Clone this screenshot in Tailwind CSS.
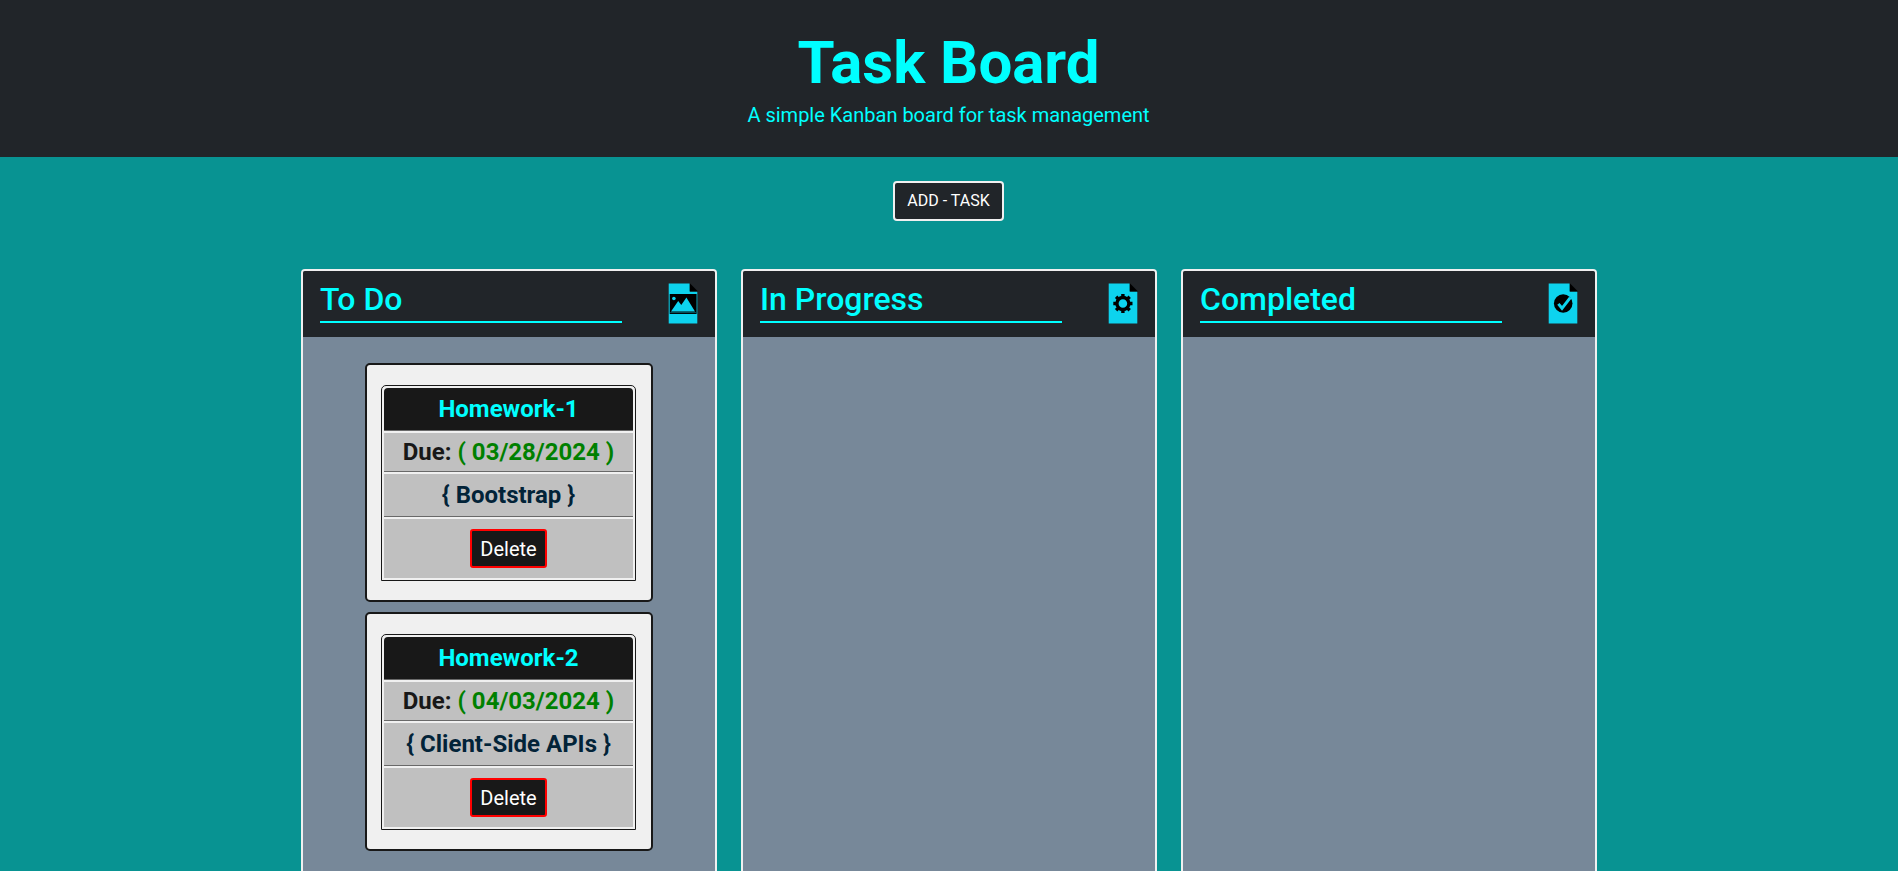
<!DOCTYPE html>
<html lang="en">
<head>
<meta charset="utf-8">
<title>Task Board</title>
<script src="https://cdn.jsdelivr.net/npm/@tailwindcss/browser@4"></script>
</head>
<body class="flex h-screen flex-col overflow-hidden bg-[#089392] font-['Roboto',sans-serif]">
<header class="flex h-[157px] shrink-0 flex-col items-center bg-[#212529] pt-[27px] text-[#00ffff]">
  <h1 class="pr-px text-[60px] font-bold leading-[72px]">Task Board</h1>
  <p class="mt-px pr-px text-[20px] leading-[30px]">A simple Kanban board for task management</p>
</header>
<div class="flex shrink-0 justify-center pr-px pt-6">
  <button class="h-10 w-[111px] rounded-[4px] border-2 border-[#f0f0f0] bg-[#212529] text-[16px] leading-6 text-white">ADD - TASK</button>
</div>
<main class="mt-12 flex min-h-0 flex-1 justify-center gap-6">
  <section class="w-[416px] rounded-t-[4px] border-2 border-b-0 border-[#f0f0f0] bg-[#778899]">
    <div class="flex h-[66px] justify-between rounded-t-[2px] bg-[#212529] px-[17px]">
      <h2 class="mt-[8px] h-[44px] w-[302px] border-b-2 border-[#00ffff] text-[32px] font-medium leading-[40px] text-[#00ffff]">To Do</h2>
      <svg class="mt-3 h-[41px] w-[30px]" viewBox="0 0 30 41">
        <path d="M.7.4H22V8.5H29.3V40.4H.7Z" fill="#0dd3ee"/>
        <path d="M21.6 0L30 8.5H21.6Z" fill="#000"/>
        <path d="M1.7 11H28.6V31H1.7Z" fill="#000"/>
        <circle cx="5.9" cy="15.5" r="1.8" fill="#0dd3ee"/>
        <path d="M3 28.4L10.2 18L13.3 22L18.4 14.4L27 28.4Z" fill="#0dd3ee"/>
        <path d="M2.2 29.6H28" stroke="#0a8fa2" stroke-width=".6"/>
      </svg>
    </div>
    <div class="flex flex-col items-center gap-[10px] pt-[26px]">
      <article class="h-[239px] w-[288px] rounded-[5px] border-2 border-[#181818] bg-[#f0f0f0] pl-[14px] pt-5">
        <div class="h-[196px] w-[255px] rounded-t-[5px] border border-[#181818] p-[2px]">
          <h3 class="h-[43px] rounded-t-[4px] border-b border-[#696969] bg-[#181818] text-center text-[24px] font-bold leading-[43px] text-[#00ffff]">Homework-1</h3>
          <p class="mt-[2px] h-[39px] border-b border-[#696969] bg-[#c0c0c0] text-center text-[24px] font-bold leading-[39px] text-[#181818]">Due: <span class="text-[#008000]">( 03/28/2024 )</span></p>
          <p class="mt-[2px] h-[43px] border-b border-[#696969] bg-[#c0c0c0] text-center text-[24px] font-bold leading-[43px] text-[#022338]">{ Bootstrap }</p>
          <div class="mt-[2px] flex h-[59px] justify-center bg-[#c0c0c0] pt-[10px]">
            <button class="h-[39px] w-[77px] rounded-[3px] border-2 border-[#ff0000] bg-[#181818] text-[20px] leading-[30px] text-white">Delete</button>
          </div>
        </div>
      </article>
      <article class="h-[239px] w-[288px] rounded-[5px] border-2 border-[#181818] bg-[#f0f0f0] pl-[14px] pt-5">
        <div class="h-[196px] w-[255px] rounded-t-[5px] border border-[#181818] p-[2px]">
          <h3 class="h-[43px] rounded-t-[4px] border-b border-[#696969] bg-[#181818] text-center text-[24px] font-bold leading-[43px] text-[#00ffff]">Homework-2</h3>
          <p class="mt-[2px] h-[39px] border-b border-[#696969] bg-[#c0c0c0] text-center text-[24px] font-bold leading-[39px] text-[#181818]">Due: <span class="text-[#008000]">( 04/03/2024 )</span></p>
          <p class="mt-[2px] h-[43px] border-b border-[#696969] bg-[#c0c0c0] text-center text-[24px] font-bold leading-[43px] text-[#022338]">{ Client-Side APIs }</p>
          <div class="mt-[2px] flex h-[59px] justify-center bg-[#c0c0c0] pt-[10px]">
            <button class="h-[39px] w-[77px] rounded-[3px] border-2 border-[#ff0000] bg-[#181818] text-[20px] leading-[30px] text-white">Delete</button>
          </div>
        </div>
      </article>
    </div>
  </section>
  <section class="w-[416px] rounded-t-[4px] border-2 border-b-0 border-[#f0f0f0] bg-[#778899]">
    <div class="flex h-[66px] justify-between rounded-t-[2px] bg-[#212529] px-[17px]">
      <h2 class="mt-[8px] h-[44px] w-[302px] border-b-2 border-[#00ffff] text-[32px] font-medium leading-[40px] text-[#00ffff]">In Progress</h2>
      <svg class="mt-3 h-[41px] w-[30px]" viewBox="0 0 30 41">
        <path d="M.7.4H22V8.5H29.3V40.4H.7Z" fill="#0dd3ee"/>
        <path d="M21.6 0L30 8.5H21.6Z" fill="#000"/>
        <circle cx="14.9" cy="20.5" r="6" fill="none" stroke="#000" stroke-width="3.4"/>
        <path d="M14.9 10.9V13.5M14.9 27.5V30.1M5.3 20.5H8M21.8 20.5H24.5M8.1 13.7L10 15.6M19.8 25.4L21.7 27.3M8.1 27.3L10 25.4M19.8 15.6L21.7 13.7" stroke="#000" stroke-width="3.4"/>
      </svg>
    </div>
  </section>
  <section class="w-[416px] rounded-t-[4px] border-2 border-b-0 border-[#f0f0f0] bg-[#778899]">
    <div class="flex h-[66px] justify-between rounded-t-[2px] bg-[#212529] px-[17px]">
      <h2 class="mt-[8px] h-[44px] w-[302px] border-b-2 border-[#00ffff] text-[32px] font-medium leading-[40px] text-[#00ffff]">Completed</h2>
      <svg class="mt-3 h-[41px] w-[30px]" viewBox="0 0 30 41">
        <path d="M.7.4H22V8.5H29.3V40.4H.7Z" fill="#0dd3ee"/>
        <path d="M21.6 0L30 8.5H21.6Z" fill="#000"/>
        <circle cx="15.2" cy="20.5" r="9.3" fill="#000"/>
        <path d="M10.4 20.9L14 25.3L22.3 14.6" fill="none" stroke="#0dd3ee" stroke-width="3"/>
      </svg>
    </div>
  </section>
</main>
</body>
</html>
